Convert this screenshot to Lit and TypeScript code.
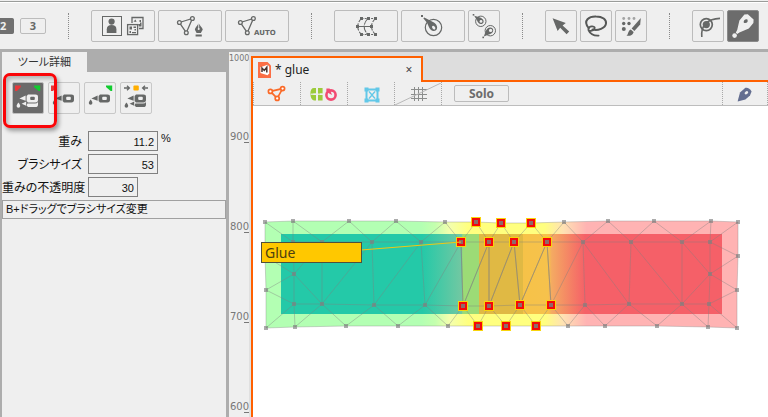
import { LitElement, html, css, svg } from "lit";
import { customElement } from "lit/decorators.js";

type Pt = [number, number];

const INK = "#666867";

/* ---------- toolbar icons ---------- */

const icon = (w: number, h: number, body: unknown) =>
  html`<svg class="icon" width=${w} height=${h} viewBox="0 0 ${w} ${h}" aria-hidden="true">${body}</svg>`;

const triangleMesh = (pts: Pt[], color: string, r: number, sw: number, fill: string) => svg`
  <polygon points=${pts.map((p) => p.join(",")).join(" ")} fill="none" stroke=${color} stroke-width=${sw}/>
  ${pts.map((p) => svg`<circle cx=${p[0]} cy=${p[1]} r=${r} fill=${fill} stroke=${color} stroke-width=${sw}/>`)}`;

const modelIcon = icon(64, 32, svg`
  <rect x="11.5" y="6.5" width="19" height="19" fill="none" stroke=${INK}/>
  <circle cx="20.6" cy="11.6" r="3.1" fill=${INK}/>
  <path d="M15.8 23V19.2C15.8 16.4 17.6 15 20.6 15S25.4 16.4 25.4 19.2V23Z" fill=${INK}/>
  <path d="M41 13V7.5H52V18.5H48" fill="none" stroke=${INK} stroke-width="1.3"/>
  <path d="M42.5 11.5L44.5 9.5L45.5 12ZM48.5 10H50V12H48.5ZM47 14H49V12.5H50.5V16.5H48Z" fill=${INK}/>
  <rect x="36.6" y="14.6" width="10" height="10" fill="#efefef" stroke=${INK} stroke-width="1.3"/>
  <path d="M38.5 16.5H41V19.5H38.5ZM42.5 16.5H45V18H42.5ZM38.5 21H40V23H38.5ZM41 22H45V23.2H41ZM43.5 19H45V20.5H43.5Z" fill=${INK}/>`);

const meshPenIcon = icon(64, 32, svg`
  ${triangleMesh([[21.4, 12.5], [34.4, 8.5], [28.3, 22.7]], INK, 1.9, 1.3, "#efefef")}
  <path d="M40.7 13.2C39 16.2 36.7 17.8 36.9 19.8L38.6 23H42.8L44.7 19.8C44.8 17.8 42.3 16.2 40.7 13.2Z" fill=${INK}/>
  <path d="M40.7 13V19" stroke="#efefef" stroke-width="0.9"/>
  <circle cx="40.7" cy="19" r="1" fill="#efefef"/>
  <path d="M37.6 24.4H43.8V26.6H37.6Z" fill=${INK}/>`);

const meshAutoIcon = icon(64, 32, svg`
  ${triangleMesh([[15.4, 12.5], [28.4, 8.5], [22.3, 22.7]], INK, 1.9, 1.3, "#efefef")}
  <rect x="28" y="19" width="24" height="7" fill="#efefef"/>
  <text x="29" y="25" class="auto">AUTO</text>`);

const sq = (x: number, y: number, s: number, c: string) =>
  svg`<rect x=${x - s / 2} y=${y - s / 2} width=${s} height=${s} fill=${c}/>`;

const latticeIcon = icon(64, 32, svg`
  <g fill="none" stroke=${INK} stroke-width="1.1">
    <path d="M27.5 8.5H41.5M27.5 24.5H41.5" stroke-dasharray="2 1.2"/>
    <path d="M26.5 9.5Q21 16.5 26.5 23.5M40.5 9.5Q34.5 16.5 40.5 23.5" stroke-dasharray="3 1.4"/>
    <path d="M33.8 8.5Q26.5 16.5 33.8 24.5" stroke-dasharray="7 1"/>
    <path d="M23.5 16.5H37.5"/>
  </g>
  ${[27.5, 34.5, 41.5].map((x) => [sq(x, 8.5, 3, INK), sq(x, 24.5, 3, INK)])}
  ${sq(23.5, 16.5, 3, INK)}${sq(37.5, 16.5, 3, INK)}`);

const rotateIcon = icon(64, 32, svg`
  <circle cx="32.5" cy="17.5" r="8.2" fill="none" stroke=${INK} stroke-width="1.2"/>
  <path d="M22.3 8.2L23.3 7.4L31.5 11.8C35.8 13.8 37.3 17.6 35.3 20C33 22 29.5 21 28 17.3L26.2 13Z" fill=${INK}/>
  <ellipse cx="32.7" cy="17.6" rx="1.4" ry="2" transform="rotate(-40 32.7 17.6)" fill="#efefef"/>
  ${sq(21, 6, 2, INK)}`);

const rotatePairIcon = icon(32, 32, svg`
  <g fill="none" stroke=${INK}><circle cx="12.8" cy="11.3" r="5.2"/><circle cx="22.3" cy="20.7" r="5.2"/></g>
  <path d="M6.2 5.8L12.2 7.4C16 9 16.4 12 14.6 13.4C12.6 14.6 10 13.6 9.2 10.8Z" fill=${INK}/>
  <path d="M15.8 26.4L18 20.6C19.4 17.6 22.4 16.8 24.6 18.4C26 20.2 25 22.8 22.2 24Z" fill=${INK}/>
  <circle cx="13" cy="11.4" r="1.4" fill="#efefef"/><circle cx="22.6" cy="20.4" r="1.6" fill="#efefef"/>
  ${sq(5.5, 4.8, 1.6, INK)}${sq(15.2, 27.4, 1.6, INK)}`);

const arrowIcon = icon(32, 32, svg`
  <path d="M7.6 8.2L20.8 13L17.6 15.6L24.2 21.6L21.6 24.2L15.2 17.8L12.6 21Z" fill=${INK}/>`);

const lassoIcon = icon(32, 32, svg`
  <g fill="none" stroke="#565857" stroke-linecap="round">
    <path d="M8.6 18C2.4 10.2 9.4 6.2 16 6.4C22.6 6.4 26.6 9.8 26 13.6C25.4 18.2 17.8 21 12.6 19.6" stroke-width="2"/>
    <path d="M14.8 18C14.6 15.6 9 15.8 8.4 19C8 22 13.4 21.4 14.8 18ZM8.6 20.4C10.4 24.4 14.4 25.8 18.6 25.6" stroke-width="1.8"/>
  </g>`);

const brushIcon = icon(32, 32, svg`
  <g fill="#a2a3a3"><circle cx="8.7" cy="8.5" r="1.4"/><circle cx="14" cy="8.5" r="1.4"/><circle cx="19" cy="8.5" r="1.4"/></g>
  <g fill=${INK}><circle cx="8.7" cy="13.5" r="1.7"/><circle cx="14" cy="13.5" r="1.7"/><circle cx="8.8" cy="19" r="2"/></g>
  <path d="M25.8 8L25.2 14.6L19.4 21L16.6 18.4Z" fill=${INK}/>
  <path d="M15.8 19.4L18.6 22C18 25.4 15 26 11.4 25.8C13.6 24.2 12.8 20.6 15.8 19.4Z" fill=${INK}/>`);

const deformIcon = icon(32, 32, svg`
  <path d="M9.8 27C8.6 15 16 8.8 28 8.4" fill="none" stroke=${INK} stroke-width="1.6"/>
  <circle cx="14.3" cy="14.6" r="6" fill="none" stroke=${INK} stroke-width="1.7"/>
  <circle cx="14.3" cy="14.6" r="3.6" fill=${INK}/>`);

const glueIcon = icon(32, 32, svg`
  <path d="M17.4 4.4L20.8 4.2L26.6 9.6L26.4 13L21.8 18.4L12.4 22.4L10.2 24L8.8 22.4L10.2 20L12.4 10.6Z" fill="#efefef"/>
  <circle cx="7.6" cy="25.6" r="2.3" fill="#efefef"/>
  <path d="M16.8 12.8C16.2 10.4 18.2 8.8 20.4 9.4C21.4 11.4 20 13.8 16.8 12.8Z" fill=${INK}/>`);

/* ---------- tool detail icons ---------- */

const tube = (c: string, hole: string, double: boolean) => svg`
  <path d="M7.4 16.4L13.6 13.4V18.8Z" fill=${c}/>
  <path d="M16 12.6H23.4Q26 12.6 26 15V18Q26 20.4 23.4 20.4H16L14.6 19V14Z" fill=${c}/>
  <rect x="18.2" y="14.8" width="4.6" height="3.2" rx="1" fill=${hole}/>
  ${double ? svg`
    <path d="M9.6 21.8L14.2 19.6V23.8Z" fill=${c}/>
    <path d="M15.4 21.6H23Q25 21.6 26 20V22.4Q26 25 23.4 25H16L14.6 23.6Z" fill=${c}/>
    <path d="M6.4 20.4C8 22.4 8.2 23.2 8.2 24A1.8 1.8 0 0 1 4.6 24C4.6 23.2 5 22.2 6.4 20.4Z" fill=${c}/>`
  : svg`<path d="M6.6 17.4C8.2 19.4 8.4 20.2 8.4 21A1.8 1.8 0 0 1 4.8 21C4.8 20.2 5.2 19.2 6.6 17.4Z" fill=${c}/>`}`;

const redCorner = svg`<path d="M3 3.4H8.8V5L5 9H3Z" fill="#e8383a"/>`;
const greenCorner = svg`<path d="M22 3.4H28.2V9H26.6L22 5Z" fill="#12cc30"/>`;

const detailTools = [
  { name: "両方に接着", on: true, art: svg`${redCorner}${greenCorner}${tube("#efefef", "#666867", true)}` },
  { name: "赤側に接着", on: false, art: svg`${redCorner}${tube(INK, "#efefef", false)}` },
  { name: "緑側に接着", on: false, art: svg`${greenCorner}${tube(INK, "#efefef", false)}` },
  { name: "中間に接着", on: false, art: svg`
      <rect x="13.4" y="3.6" width="5.4" height="5" rx="1" fill="#ffae00"/>
      <path d="M4 6H9M7 3.8L9.4 6L7 8.2M28 6H23M25 3.8L22.6 6L25 8.2" fill="none" stroke=${INK} stroke-width="1.3"/>
      ${tube(INK, "#efefef", true)}` },
];

/* ---------- document icons ---------- */

const docMesh = icon(46, 22, svg`${triangleMesh([[16.4, 8.4], [28.6, 5.6], [23.2, 15.4]], "#fa6a28", 2, 1.7, "#fff")}`);

const docGlue = icon(46, 22, svg`
  <path d="M15 5H13Q9.4 5 9.4 10.6Q9.4 17 13 17.4H15V12H12.4V10.4H15ZM17 5H21.6V10.4H19V12H21.6V17.4H17Z" fill="#9ccb3b"/>
  <path d="M9.8 11.2H21.6" stroke="#efefef" stroke-width="1.2"/>
  <circle cx="30" cy="12" r="4.6" fill="none" stroke="#f24a72" stroke-width="2.6"/>
  <path d="M25.4 5.6H28.6L31 12Q27 10.4 25.4 8Z" fill="#f24a72"/>`);

const docLattice = icon(46, 22, svg`
  <g stroke="#62c8e8" fill="none"><path d="M18.5 6.5H29.5V17.5H18.5Z" stroke-width="2"/><path d="M21 8.5L27 15.5M27 8.5L21 15.5" stroke-width="1.3"/></g>
  ${[18.5, 29.5].map((x) => [6.5, 17.5].map((y) => sq(x, y, 4, "#62c8e8")))}`);

const docGrid = icon(46, 22, svg`
  <path d="M19.5 4V18M23.5 4V18M27.5 4V18M16 6.5H32M16 11.5H32M16 15.5H32" stroke="#8b8d8c" fill="none"/>
  <path d="M0 22L46 0" stroke="#b8b8b8"/>`);

const docPen = icon(44, 22, svg`
  <path d="M14.6 18.4L17 9.6L22.4 4.8Q26 4 28.6 8.4L27 12.4L22.4 16.4Z" fill="#646e90"/>
  <ellipse cx="23.4" cy="9.8" rx="2" ry="1.4" transform="rotate(-40 23.4 9.8)" fill="#efefef"/>`);

const modelFile = html`<svg width="13" height="16" viewBox="0 0 13 16" aria-hidden="true">
  <path d="M0 0H9.5L13 3.5V16H0Z" fill="#fb6e45"/>
  <path d="M2.4 5.2L9.6 2.8L11.2 4.8V11.2L9.6 13.2L2.4 11Z" fill="#fff"/>
  <path d="M4 10V6L6.3 8.4L8.8 5.2V10.6" fill="none" stroke="#4a3430" stroke-width="1.5"/></svg>`;

/* ---------- canvas mesh ---------- */

const outerTop: Pt[] = [[265, 222], [293, 221], [349, 221], [396, 221], [445, 222], [476, 222], [501, 223], [531, 223], [564, 222], [608, 221], [654, 221], [711, 221], [738, 222]];
const innerTop: Pt[] = [[293, 242], [322, 242], [372, 242], [421, 242], [461, 242], [489, 242], [514, 242], [547, 242], [583, 242], [631, 242], [682, 242], [710, 242]];
const innerBottom: Pt[] = [[294, 304], [322, 304], [374, 305], [425, 305], [463, 306], [489, 306], [520, 305], [551, 305], [585, 305], [629, 304], [682, 304], [709, 304]];
const outerBottom: Pt[] = [[266, 328], [295, 327], [346, 326], [398, 326], [448, 326], [478, 326], [506, 326], [536, 326], [568, 326], [605, 326], [657, 326], [708, 327], [737, 328]];
const leftMid: Pt = [294, 274];
const rightMid: Pt = [710, 274];
const leftOuter: Pt[] = [[265, 256], [266, 290]];
const rightOuter: Pt[] = [[738, 256], [737, 290]];

const outline: Pt[] = [...outerTop, ...rightOuter, ...[...outerBottom].reverse(), leftOuter[1], leftOuter[0]];
const poly = (pts: Pt[]) => pts.map((p) => p.join(",")).join(" ");
const seg = (a: Pt, b: Pt) => `M${a[0]} ${a[1]}L${b[0]} ${b[1]}`;

const edges: string = [
  ...innerTop.slice(1).map((p, i) => seg(innerTop[i], p)),
  ...innerBottom.slice(1).map((p, i) => seg(innerBottom[i], p)),
  ...innerTop.flatMap((p, i) => [seg(outerTop[i], p), seg(p, outerTop[i + 1])]),
  ...innerBottom.flatMap((p, i) => [seg(outerBottom[i], p), seg(p, outerBottom[i + 1])]),
  ...innerTop.slice(1, 11).map((p, i) => seg(p, innerBottom[i + 1])),
  ...[1, 2, 3, 4, 5, 6, 7].map((i) => seg(innerBottom[i], innerTop[i + 1])),
  ...[8, 9].map((i) => seg(innerTop[i], innerBottom[i + 1])),
  ...[innerTop[0], innerTop[1], innerBottom[0], innerBottom[1], ...leftOuter].map((p) => seg(leftMid, p)),
  ...[innerTop[11], innerTop[10], innerBottom[11], innerBottom[10], ...rightOuter].map((p) => seg(rightMid, p)),
  seg(leftOuter[0], innerTop[0]), seg(leftOuter[1], innerBottom[0]),
  seg(rightOuter[0], innerTop[11]), seg(rightOuter[1], innerBottom[11]),
].join("");

const gluedEdges: string = [
  ...[4, 5, 6, 7].map((i) => seg(innerTop[i], innerBottom[i])),
  ...[4, 5, 6].map((i) => seg(innerBottom[i], innerTop[i + 1])),
].join("");

const glued: Pt[] = [...outerTop.slice(5, 8), ...innerTop.slice(4, 8), ...innerBottom.slice(4, 8), ...outerBottom.slice(5, 8)];
const free: Pt[] = [...outerTop, ...innerTop, ...innerBottom, ...outerBottom, leftMid, rightMid, ...leftOuter, ...rightOuter].filter((p) => !glued.includes(p));

const canvasArt = html`<svg class="canvas" viewBox="253 106 515 311" preserveAspectRatio="xMinYMin slice" role="img" aria-label="glue">
  <defs>
    <linearGradient id="skin" gradientUnits="userSpaceOnUse" x1="265" x2="738" y1="0" y2="0">
      <stop offset="0.33" stop-color="#b3ffb3"/><stop offset="0.36" stop-color="#c4ffae"/><stop offset="0.39" stop-color="#f3ffae"/><stop offset="0.43" stop-color="#ffff7f"/>
      <stop offset="0.59" stop-color="#ffff7f"/><stop offset="0.63" stop-color="#ffe2b3"/><stop offset="0.68" stop-color="#ffb3b3"/>
    </linearGradient>
    <linearGradient id="core" gradientUnits="userSpaceOnUse" x1="281" x2="722" y1="0" y2="0">
      <stop offset="0.32" stop-color="#24c9a8"/><stop offset="0.41" stop-color="#72c8a2"/><stop offset="0.412" stop-color="#9cdb76"/>
      <stop offset="0.449" stop-color="#9cdb76"/><stop offset="0.449" stop-color="#e0b944"/><stop offset="0.549" stop-color="#e0b944"/>
      <stop offset="0.549" stop-color="#f6c248"/><stop offset="0.606" stop-color="#f6c24c"/><stop offset="0.614" stop-color="#f4aa62"/><stop offset="0.69" stop-color="#f56068"/>
    </linearGradient>
  </defs>
  <polygon points=${poly(outline)} fill="url(#skin)"/>
  <rect x="281" y="234" width="441" height="80" fill="url(#core)"/>
  <polygon points=${poly(outline)} fill="none" stroke="#808080" stroke-opacity="0.35"/>
  <path d=${edges} fill="none" stroke="#808080" stroke-opacity="0.4"/>
  <path d=${gluedEdges} fill="none" stroke="#808080" stroke-opacity="0.5"/>
  ${free.map((p) => svg`<rect x=${p[0] - 2} y=${p[1] - 2} width="4" height="4" fill="#808080" fill-opacity="0.65"/>`)}
  ${glued.map((p) => svg`
    <rect x=${p[0] - 5} y=${p[1] - 5} width="10" height="10" fill="#f8d40c"/>
    <rect x=${p[0] - 4} y=${p[1] - 4} width="8" height="8" fill="#f40808"/>
    <rect x=${p[0] - 2} y=${p[1] - 2} width="4" height="4" fill="#8e6a6a"/>`)}
  <path d="M361 250L461 242" stroke="#f0c814"/>
  <rect x="261.5" y="242.5" width="100" height="20" fill="#ffc800" stroke="#50503c"/>
  <text x="265" y="258" class="glue-name">Glue</text>
</svg>`;

/* ---------- components ---------- */

const shared = css`
  :host, * { box-sizing: border-box; }
  button { margin: 0; padding: 0; font: inherit; color: inherit; background: none; border: 0; display: block; }
  svg { display: block; }
  .icon { flex: none; }
`;

@customElement("tool-bar")
class ToolBar extends LitElement {
  static styles = [shared, css`
    :host { display: flex; align-items: center; height: 52px; padding-top: 2px; overflow: hidden; background: #efefef;
      border-top: 1px solid #efefef; border-bottom: 3px solid #adadad; box-shadow: inset 0 1px #9a9c9a, inset 0 2px #fff; }
    .levels { display: flex; gap: 6px; flex: none; }
    .level { width: 26px; height: 16px; border: 1px solid #bcbcbc; border-radius: 2px; color: #666867;
      font: bold 11px/14px "Open Sans", sans-serif; text-align: center; }
    .level.on { width: 14px; background: #707070; border-color: #707070; border-left: 0; border-radius: 0 2px 2px 0; color: #efefef;
      text-align: left; }
    .group { display: flex; gap: 3px; flex: none; }
    .tool { height: 32px; border: 1px solid #bcbcbc; border-radius: 2px; display: grid; place-items: center; overflow: hidden; }
    .wide { width: 64px; }
    .small { width: 32px; }
    .tool svg { margin: -1px; }
    .tool.on { background: #6c6c6c; border-color: #8a8a8a; }
    .sep { flex: none; height: 26px; margin: 0 22px; border-left: 1px dotted #8a8a8a; }
    .auto { font: bold 7px "DejaVu Sans", sans-serif; fill: #666867; }
  `];
  tool(name: string, size: string, art: unknown, on = false) {
    return html`<button class="tool ${size} ${on ? "on" : ""}" aria-label=${name}>${art}</button>`;
  }
  render() {
    return html`
      <div class="levels"><button class="level on">2</button><button class="level">3</button></div>
      <span class="sep"></span>
      <div class="group">
        ${this.tool("モデル", "wide", modelIcon)}
        ${this.tool("メッシュの手動編集", "wide", meshPenIcon)}
        ${this.tool("メッシュの自動生成", "wide", meshAutoIcon)}
      </div>
      <span class="sep"></span>
      <div class="group">
        ${this.tool("ワープデフォーマ", "wide", latticeIcon)}
        ${this.tool("回転デフォーマ", "wide", rotateIcon)}
        ${this.tool("回転デフォーマの親子", "small", rotatePairIcon)}
      </div>
      <span class="sep"></span>
      <div class="group">
        ${this.tool("矢印", "small", arrowIcon)}
        ${this.tool("投げ縄", "small", lassoIcon)}
        ${this.tool("ブラシ選択", "small", brushIcon)}
      </div>
      <span class="sep"></span>
      <div class="group">
        ${this.tool("変形パス", "small", deformIcon)}
        ${this.tool("グルー", "small", glueIcon, true)}
      </div>`;
  }
}

@customElement("tool-detail")
class ToolDetail extends LitElement {
  static styles = [shared, css`
    :host { display: flex; flex-direction: column; width: 229px; flex: none; background: #adadad; padding: 0 3px 0 2px; color: #111;
      font: 12px/16px "Liberation Sans", "Noto Sans CJK JP", sans-serif; font-feature-settings: "palt"; }
    .tab { height: 20px; width: 85px; background: #efefef; font-size: 11px; line-height: 20px; text-align: center; color: #333; }
    .body { flex: 1; background: #efefef; padding-top: 10px; }
    .tools { display: flex; gap: 4px; padding-left: 10px; }
    .slot { position: relative; }
    .tool { width: 32px; height: 32px; border: 1px solid #c8c8c8; border-radius: 2px; }
    .tool svg { margin: -1px; }
    .tool.on { background: #6a6a6a; border-color: #c0c0c0; }
    .callout { position: absolute; inset: -9px -13px -14px -9px; border: 3px solid #fa0508; border-radius: 7px;
      box-shadow: 2px 3px 4px rgb(0 0 0 / 35%), inset 2px 3px 4px rgb(0 0 0 / 25%); pointer-events: none; z-index: 1; }
    .row { display: grid; grid-template-columns: 80px auto 1fr; column-gap: 6px; align-items: center; margin-bottom: 3px; }
    .rows { padding-top: 17px; }
    label { text-align: right; white-space: nowrap; padding-top: 2px; }
    input { height: 20px; width: 70px; margin: 0; padding: 2px 3px 0 3px; border: 1px solid #808080; background: #efefef; border-radius: 0;
      font: 11px/16px "Liberation Sans", sans-serif; text-align: right; color: #111; }
    input.short { width: 50px; }
    .unit { font-size: 11px; align-self: start; line-height: 14px; margin-left: -3px; }
    .hint { height: 19px; border: 1px solid #a0a0a0; padding-left: 3px; font-size: 11px; line-height: 17px; white-space: nowrap; }
  `];
  render() {
    return html`
      <div class="tab">ツール詳細</div>
      <div class="body">
        <div class="tools">
          ${detailTools.map((t) => html`<div class="slot">
            <button class="tool ${t.on ? "on" : ""}" aria-label=${t.name}>${icon(32, 32, t.art)}</button>
            ${t.on ? html`<span class="callout"></span>` : ""}
          </div>`)}
        </div>
        <div class="rows">
          <div class="row"><label for="weight">重み</label><input id="weight" .value=${"11.2"} /><span class="unit">%</span></div>
          <div class="row"><label for="size">ブラシサイズ</label><input id="size" .value=${"53"} /></div>
          <div class="row"><label for="opacity">重みの不透明度</label><input id="opacity" class="short" .value=${"30"} /></div>
        </div>
        <div class="hint">B+ドラッグでブラシサイズ変更</div>
      </div>`;
  }
}

@customElement("model-view")
class ModelView extends LitElement {
  static styles = [shared, css`
    :host { display: flex; flex: 1; min-width: 0; }
    .ruler { flex: none; width: 22px; background: #efefef; font: 10px/10px "DejaVu Sans", sans-serif; color: #777;
      display: flex; flex-direction: column; overflow: hidden; border-right: 2px solid #e0e0e0; }
    .mark { flex: none; height: 90px; display: flex; flex-direction: column; justify-content: flex-end; align-items: flex-end; }
    .mark::after { content: ""; width: 5px; height: 1px; background: #777; }
    .mark.first { height: 13px; padding-bottom: 1px; align-items: flex-start; font-size: 8px; }
    .mark.first + .mark { height: 78px; }
    .mark.first::after { display: none; }
    .doc { flex: 1; min-width: 0; display: flex; flex-direction: column; border-left: 2px solid #ff6000; background: #fff; }
    .tabs { display: flex; height: 30px; margin-left: -2px; padding-top: 4px; background: #ddd; flex: none; align-items: stretch; }
    .tab { width: 172px; border: 2px solid #ff6000; border-bottom: 0; background: #efefef; display: flex; align-items: center; gap: 4px;
      padding: 0 6px 0 5px; font: 12px/16px "Noto Sans", sans-serif; color: #222; }
    .tab .name { flex: 1; white-space: nowrap; }
    .close { width: 12px; height: 16px; font-size: 12px; line-height: 16px; text-align: center; color: #444; }
    .rest { flex: 1; border-bottom: 2px solid #ff6000; }
    .bar { display: flex; height: 24px; background: #efefef; border-bottom: 1px solid #bdbdbd; flex: none; align-items: center; }
    .cell { width: 47px; height: 23px; border-left: 1px dotted #a8a8a8; flex: none; }
    .solo { width: 55px; height: 17px; margin: 0 auto 0 12px; border: 1px solid #bcbcbc; border-radius: 2px; color: #6c6c6c;
      font: bold 12px/15px "Noto Sans", sans-serif; }
    .end { width: 1px; height: 23px; border-left: 1px dotted #a8a8a8; }
    .pen { width: 45px; }
    .canvas { width: 100%; flex: 1; min-height: 0; }
    .glue-name { font: 14px "Noto Sans", sans-serif; fill: #4c4010; }
  `];
  render() {
    return html`
      <div class="ruler">
        ${["1000", "900", "800", "700", "600"].map((v, i) => html`<div class="mark ${i ? "" : "first"}">${v}</div>`)}
      </div>
      <div class="doc">
        <div class="tabs">
          <div class="tab">${modelFile}<span class="name">* glue</span><button class="close" aria-label="閉じる">×</button></div>
          <div class="rest"></div>
        </div>
        <div class="bar">
          <button class="cell" aria-label="メッシュ表示">${docMesh}</button>
          <button class="cell" aria-label="グルー表示">${docGlue}</button>
          <button class="cell" aria-label="デフォーマ表示">${docLattice}</button>
          <button class="cell" aria-label="グリッド表示">${docGrid}</button>
          <span class="end"></span>
          <button class="solo">Solo</button>
          <button class="cell pen" aria-label="グルーツール">${docPen}</button>
          <span class="end"></span>
        </div>
        ${canvasArt}
      </div>`;
  }
}

@customElement("app-root")
class AppRoot extends LitElement {
  static styles = css`
    :host { display: flex; flex-direction: column; min-height: 100vh; overflow: hidden; }
    .main { display: flex; flex: 1; align-items: stretch; }
  `;
  render() {
    return html`<tool-bar></tool-bar><div class="main"><tool-detail></tool-detail><model-view></model-view></div>`;
  }
}
